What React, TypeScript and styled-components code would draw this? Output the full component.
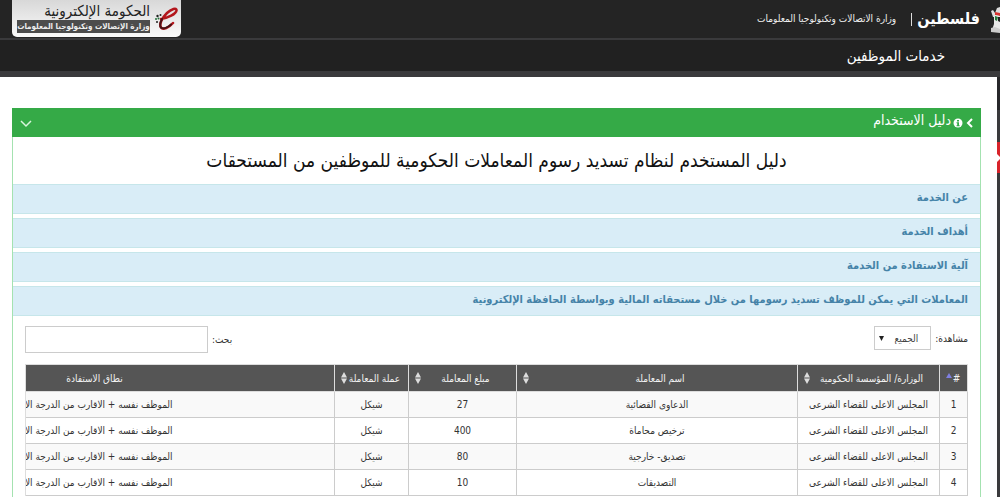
import React from "react";
import styled, { createGlobalStyle } from "styled-components";

const Global = createGlobalStyle`
  *, *::before, *::after { box-sizing: border-box; }
  html, body { margin: 0; background: #3a3a3c; overflow: hidden; }
  body { font-family: "DejaVu Sans Condensed", "DejaVu Sans", sans-serif; color: #333; direction: rtl; }
  #root { height: 100vh; overflow: hidden; }
`;

const Page = styled.div`
  min-height: 100vh;
  display: flex;
  flex-direction: column;
  position: relative;
  background: linear-gradient(#28282a 110px, #3a3a3c 110px);
`;

const TopBar = styled.header`
  height: 38px;
  background: #242424;
  display: flex;
  justify-content: space-between;
  align-items: flex-start;
  padding-left: 12px;
`;

const Brand = styled.div`
  display: flex;
  align-items: center;
  height: 38px;
  color: #fff;
`;

const Crest = styled.svg`
  width: 10px;
  height: 34px;
`;

const Country = styled.a`
  margin-right: 10px;
  font-size: 16px;
  font-weight: bold;
  line-height: 24px;
  color: #fff;
  text-decoration: none;
`;

const Divider = styled.span`
  width: 1px;
  height: 13px;
  margin: 0 5px 0 15px;
  background: #ddd;
`;

const Ministry = styled.span`
  font-size: 10px;
  line-height: 16px;
  color: #eee;
`;

const LogoBox = styled.a`
  width: 169px;
  height: 37px;
  display: flex;
  align-items: flex-start;
  gap: 4px;
  padding: 3px 2px 0 5px;
  border-radius: 0 0 5px 5px;
  background: linear-gradient(#d8d8d8, #fafafa);
  color: #222;
  text-decoration: none;
`;

const LogoMark = styled.svg`
  width: 25px;
  height: 28px;
  flex: none;
`;

const LogoText = styled.span`
  flex: 1;
  display: flex;
  flex-direction: column;
  white-space: nowrap;
`;

const LogoTitle = styled.span`
  font-size: 15px;
  line-height: 17px;
`;

const LogoSub = styled.span`
  font-size: 8px;
  font-weight: bold;
  line-height: 13px;
  text-align: center;
  background: #4c4c4c;
  color: #eee;
`;

const NavBar = styled.nav`
  height: 39px;
  background: #212121;
  border-top: 2px solid #3a3a3c;
  border-bottom: 6px solid #3a3a3c;
  display: flex;
  align-items: center;
  padding-right: 55px;
`;

const NavLink = styled.a`
  font-size: 15px;
  line-height: 24px;
  color: #fff;
  text-decoration: none;
`;

const Content = styled.main`
  flex: 1;
  margin-right: 3px;
  padding: 31px 16px 0 12px;
  background: #fff;
`;

const SideTab = styled.button`
  position: absolute;
  right: 0;
  top: 142px;
  width: 3px;
  height: 31px;
  padding: 0;
  border: 0;
  background: #d8232a;
  overflow: hidden;
  svg { display: block; }
`;

const Panel = styled.section`
  border: 1px solid #a4e2b0;
  border-top: 0;
  min-height: 420px;
`;

const PanelHeader = styled.div`
  height: 29px;
  margin: 0 -1px;
  padding: 0 8px;
  display: flex;
  align-items: center;
  background: #35aa47;
  color: #fff;
`;

const PanelTitle = styled.h2`
  margin: 0 1px 0 auto;
  padding-bottom: 6px;
  font-size: 14px;
  font-weight: normal;
  line-height: 20px;
`;

const CollapseButton = styled.button`
  width: 12px;
  height: 12px;
  padding: 0;
  border: 0;
  background: none;
  svg { display: block; }
`;

const GuideTitle = styled.h1`
  margin: 0;
  padding-bottom: 2px;
  height: 47px;
  display: flex;
  align-items: center;
  justify-content: center;
  font-size: 19px;
  font-weight: normal;
  color: #111;
`;

const Sections = styled.div`
  display: flex;
  flex-direction: column;
  gap: 4px;
`;

const SectionLink = styled.a`
  height: 30px;
  padding: 0 12px 3px;
  display: flex;
  align-items: center;
  border: 1px solid #c6e6ea;
  border-width: 1px 0;
  background: #d9edf7;
  color: #4583a8;
  font-size: 11px;
  font-weight: bold;
  text-decoration: none;
`;

const Controls = styled.div`
  display: flex;
  justify-content: space-between;
  align-items: flex-start;
  padding: 10px 12px 11px;
`;

const Field = styled.label`
  display: flex;
  align-items: center;
  gap: 4px;
  font-size: 10px;
`;

const Select = styled.select`
  appearance: none;
  width: 57px;
  height: 24px;
  padding: 0 12px 0 16px;
  border: 1px solid #ccc;
  border-radius: 0;
  background: #fff url("data:image/svg+xml,%3Csvg xmlns='http://www.w3.org/2000/svg' width='5' height='6'%3E%3Cpath d='M0 0h5L2.5 5z' fill='%23222'/%3E%3C/svg%3E") no-repeat 4px 9px;
  font-family: inherit;
  font-size: 10px;
  color: #444;
`;

const SearchInput = styled.input`
  width: 183px;
  height: 27px;
  border: 1px solid #ccc;
  background: #fff;
  font-family: inherit;
  font-size: 10px;
`;

const TableClip = styled.div`
  margin: 0 12px;
  overflow: hidden;
  border-left: 1px solid #ddd;
`;

const Table = styled.table`
  width: calc(100% + 178px);
  table-layout: fixed;
  border-collapse: collapse;
  font-size: 10px;
  color: #333;
`;

const HeadCell = styled.th`
  height: 27px;
  padding: 0 6px;
  border: 1px solid #ddd;
  background: #555;
  color: #f2f2f2;
  font-weight: normal;
  white-space: nowrap;
`;

const HeadInner = styled.span`
  display: flex;
  align-items: center;
`;

const HeadText = styled.span`
  flex: 1;
  text-align: center;
`;

const Row = styled.tr`
  background: #fff;
  &:nth-child(odd) { background: #f9f9f9; }
`;

const Cell = styled.td`
  height: 26px;
  padding: 0;
  border: 1px solid #ccc;
  text-align: center;
  white-space: nowrap;
`;

type Sort = "asc" | "both";

const columns: { label: string; width?: number; sort: Sort }[] = [
  { label: "#", width: 28, sort: "asc" },
  { label: "الوزارة/ المؤسسة الحكومية", width: 142, sort: "both" },
  { label: "اسم المعاملة", width: 281, sort: "both" },
  { label: "مبلغ المعاملة", width: 108, sort: "both" },
  { label: "عملة المعاملة", width: 74, sort: "both" },
  { label: "نطاق الاستفادة", sort: "both" },
];

const council = "المجلس الاعلى للقضاء الشرعى";
const scope = "الموظف نفسه + الاقارب من الدرجة الاولى";

const rows = [
  { id: 1, name: "الدعاوى القضائية", amount: 27 },
  { id: 2, name: "ترخيص محاماة", amount: 400 },
  { id: 3, name: "تصديق- خارجية", amount: 80 },
  { id: 4, name: "التصديقات", amount: 10 },
];

const sections = [
  "عن الخدمة",
  "أهداف الخدمة",
  "آلية الاستفادة من الخدمة",
  "المعاملات التي يمكن للموظف تسديد رسومها من خلال مستحقاته المالية وبواسطة الحافظة الإلكترونية",
];

function SortIcon({ sort }: { sort: Sort }) {
  return (
    <svg width="6" height="12" viewBox="0 0 6 12" aria-hidden="true">
      {sort === "asc" ? (
        <path d="M0 6L3 1l3 5z" fill="#7f7fe0" />
      ) : (
        <path d="M0 5.500L3 0l3 5.500zM0 6.500h6L3 12z" fill="#ddd" />
      )}
    </svg>
  );
}

export default function App() {
  return (
    <Page>
      <Global />
      <TopBar>
        <Brand>
          <Crest viewBox="0 0 10 34" aria-hidden="true">
            <path d="M1 9l2-1 2 3 2-5 3-1v8l-3 2-4 0z" fill="#ddd" />
            <path d="M5 10l5 1v3l-5-1z" fill="#d8332f" />
            <path d="M4 13l6 1v14H2l2-6z" fill="#e8e8e8" />
            <path d="M5 14l3 1-1 4-2-1z" fill="#257a3b" />
            <path d="M8 15h2v5l-2-1z" fill="#222" />
            <path d="M1 26l4-1 5 2v4l-9-1z" fill="#ccc" />
          </Crest>
          <Country href="#">فلسطين</Country>
          <Divider />
          <Ministry>وزارة الاتصالات وتكنولوجيا المعلومات</Ministry>
        </Brand>
        <LogoBox href="#">
          <LogoMark viewBox="0 0 25 28" aria-hidden="true">
            <path d="M7 16C14 15 22 11 22.500 7.500 23 4 17 6 13 10 8 15 5 21 7 24.500c2 3 8 0 12-4.500" fill="none" stroke="#b3161c" strokeWidth="2.500" strokeLinecap="round" />
            <path d="M8 16C6 20 5.500 23 7 24.500c2 2 7 0 10-3" fill="none" stroke="#4a1215" strokeWidth="2" strokeLinecap="round" />
            <circle cx="3.500" cy="13" r="1.200" fill="#222" />
            <circle cx="6.500" cy="12" r="1" fill="#222" />
            <circle cx="2" cy="16" r="1" fill="#23703a" />
            <circle cx="4.500" cy="15.500" r="1" fill="#23703a" />
            <circle cx="3" cy="19" r="1" fill="#222" />
          </LogoMark>
          <LogoText>
            <LogoTitle>الحكومة الإلكترونية</LogoTitle>
            <LogoSub>وزارة الإتصالات وتكنولوجيا المعلومات</LogoSub>
          </LogoText>
        </LogoBox>
      </TopBar>
      <NavBar>
        <NavLink href="#">خدمات الموظفين</NavLink>
      </NavBar>
      <Content>
        <Panel>
          <PanelHeader>
            <svg width="7" height="10" viewBox="0 0 7 10" aria-hidden="true">
              <path d="M6 1L2 5l4 4" fill="none" stroke="#fff" strokeWidth="2" />
            </svg>
            <svg width="14" height="10" viewBox="0 0 14 10" aria-hidden="true">
              <circle cx="6" cy="5" r="4.500" fill="#fff" />
              <path d="M5 2h2v1.500H5zM4.500 4.300H7v3h.7v1H4.500v-1h.7v-2h-.7z" fill="#35aa47" />
            </svg>
            <PanelTitle>دليل الاستخدام</PanelTitle>
            <CollapseButton aria-label="طي">
              <svg width="12" height="12" viewBox="0 0 12 12">
                <path d="M1 4l5 5 5-5" fill="none" stroke="#d8f5dc" strokeWidth="1.500" />
              </svg>
            </CollapseButton>
          </PanelHeader>
          <GuideTitle>دليل المستخدم لنظام تسديد رسوم المعاملات الحكومية للموظفين من المستحقات</GuideTitle>
          <Sections>
            {sections.map((s) => (
              <SectionLink href="#" key={s}>{s}</SectionLink>
            ))}
          </Sections>
          <Controls>
            <Field>
              مشاهدة:
              <Select defaultValue="all">
                <option value="all">الجميع</option>
              </Select>
            </Field>
            <Field>
              بحث:
              <SearchInput type="search" />
            </Field>
          </Controls>
          <TableClip>
            <Table>
              <colgroup>
                {columns.map((c) => (
                  <col key={c.label} width={c.width} />
                ))}
              </colgroup>
              <thead>
                <tr>
                  {columns.map((c) => (
                    <HeadCell key={c.label} scope="col">
                      <HeadInner>
                        <HeadText>{c.label}</HeadText>
                        <SortIcon sort={c.sort} />
                      </HeadInner>
                    </HeadCell>
                  ))}
                </tr>
              </thead>
              <tbody>
                {rows.map((r) => (
                  <Row key={r.id}>
                    <Cell>{r.id}</Cell>
                    <Cell>{council}</Cell>
                    <Cell>{r.name}</Cell>
                    <Cell>{r.amount}</Cell>
                    <Cell>شيكل</Cell>
                    <Cell>{scope}</Cell>
                  </Row>
                ))}
              </tbody>
            </Table>
          </TableClip>
        </Panel>
      </Content>
      <SideTab aria-label="القائمة الجانبية">
        <svg width="3" height="31" viewBox="0 0 3 31">
          <path d="M0 12l3 3v2l-3 3z" fill="#fff" />
        </svg>
      </SideTab>
    </Page>
  );
}
